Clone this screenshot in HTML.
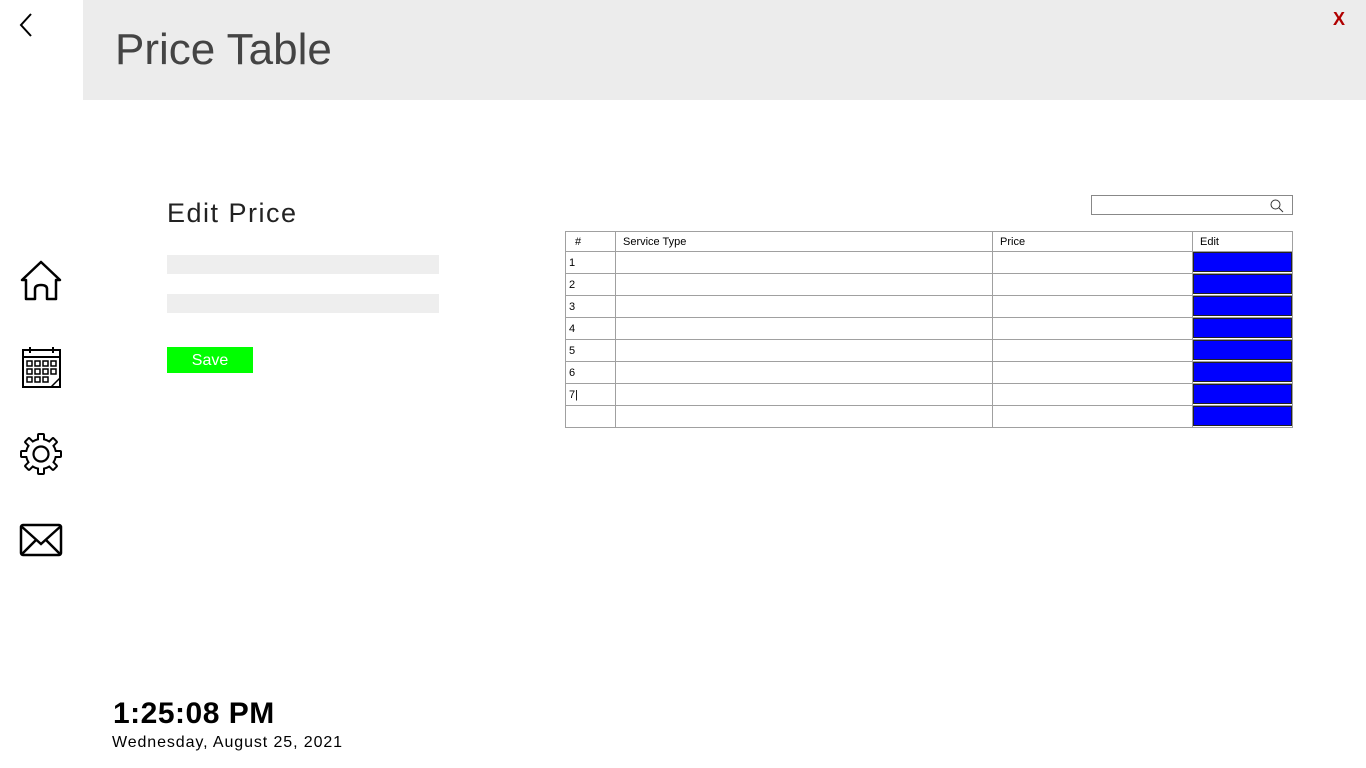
<!DOCTYPE html>
<html><head><meta charset="utf-8"><style>
body{margin:0;width:1366px;height:768px;background:#fff;position:relative;overflow:hidden;font-family:"Liberation Sans",sans-serif}
.a{position:absolute}
.hl{position:absolute;left:565px;width:728px;height:1px;background:#a0a0a0}
.vl{position:absolute;top:231px;height:197px;width:1px;background:#a0a0a0}
.t{position:absolute;font-size:11px;color:#000}
.b{position:absolute;left:1193px;width:99px;height:20px;background:#0000ff;border:1px solid #222;box-sizing:border-box}
</style></head><body>
<div class="a" style="left:83px;top:0;width:1283px;height:100px;background:#ececec"></div>
<div class="a" style="left:115px;top:25px;font-size:44px;color:#444;letter-spacing:0px">Price Table</div>
<div class="a" style="left:1333px;top:9px;font-size:18px;color:#b00000;font-weight:bold">X</div>
<svg class="a" style="left:16px;top:12px" width="20" height="28"><path d="M15 2 L5 13 L15 24" fill="none" stroke="#000" stroke-width="2"/></svg>
<svg class="a" style="left:18px;top:258px" width="48" height="48" viewBox="0 0 48 48"><path d="M4 22 L23 4 L42 22 L38 22 L38 41 L29 41 L29 31 Q29 27 23 27 Q17 27 17 31 L17 41 L8 41 L8 22 Z" fill="none" stroke="#000" stroke-width="2.5" stroke-linejoin="round"/></svg>
<svg class="a" style="left:20px;top:346px" width="42" height="44" viewBox="0 0 42 44"><rect x="3" y="4" width="37" height="37" fill="none" stroke="#000" stroke-width="2"/><line x1="3" y1="11" x2="40" y2="11" stroke="#000" stroke-width="2"/><line x1="10" y1="1" x2="10" y2="7" stroke="#000" stroke-width="2"/><line x1="33" y1="1" x2="33" y2="7" stroke="#000" stroke-width="2"/><g fill="none" stroke="#000" stroke-width="1.5"><rect x="7" y="15" width="5" height="5"/><rect x="15" y="15" width="5" height="5"/><rect x="23" y="15" width="5" height="5"/><rect x="31" y="15" width="5" height="5"/><rect x="7" y="23" width="5" height="5"/><rect x="15" y="23" width="5" height="5"/><rect x="23" y="23" width="5" height="5"/><rect x="31" y="23" width="5" height="5"/><rect x="7" y="31" width="5" height="5"/><rect x="15" y="31" width="5" height="5"/><rect x="23" y="31" width="5" height="5"/><path d="M31 41 L40 32"/></g></svg>
<svg class="a" style="left:18px;top:431px" width="46" height="46" viewBox="0 0 46 46">
<g fill="#000"><circle cx="23" cy="23" r="16"/>
<rect x="19" y="2" width="8" height="12" rx="2"/><rect x="19" y="2" width="8" height="12" rx="2" transform="rotate(45 23 23)"/><rect x="19" y="2" width="8" height="12" rx="2" transform="rotate(90 23 23)"/><rect x="19" y="2" width="8" height="12" rx="2" transform="rotate(135 23 23)"/><rect x="19" y="2" width="8" height="12" rx="2" transform="rotate(180 23 23)"/><rect x="19" y="2" width="8" height="12" rx="2" transform="rotate(225 23 23)"/><rect x="19" y="2" width="8" height="12" rx="2" transform="rotate(270 23 23)"/><rect x="19" y="2" width="8" height="12" rx="2" transform="rotate(315 23 23)"/></g>
<g fill="#fff"><circle cx="23" cy="23" r="14"/>
<rect x="21" y="4" width="4" height="12"/><rect x="21" y="4" width="4" height="12" transform="rotate(45 23 23)"/><rect x="21" y="4" width="4" height="12" transform="rotate(90 23 23)"/><rect x="21" y="4" width="4" height="12" transform="rotate(135 23 23)"/><rect x="21" y="4" width="4" height="12" transform="rotate(180 23 23)"/><rect x="21" y="4" width="4" height="12" transform="rotate(225 23 23)"/><rect x="21" y="4" width="4" height="12" transform="rotate(270 23 23)"/><rect x="21" y="4" width="4" height="12" transform="rotate(315 23 23)"/></g>
<circle cx="23" cy="23" r="7.5" fill="none" stroke="#000" stroke-width="2.2"/></svg>
<svg class="a" style="left:19px;top:522px" width="44" height="36" viewBox="0 0 44 36"><rect x="2" y="3" width="40" height="30" rx="2" fill="none" stroke="#000" stroke-width="2.5"/><path d="M2 4 L22 22 L42 4 M2 33 L17 18 M42 33 L27 18" fill="none" stroke="#000" stroke-width="2.5"/></svg>
<div class="a" style="left:167px;top:198px;font-size:27px;color:#222;letter-spacing:1.5px">Edit Price</div>
<div class="a" style="left:167px;top:255px;width:272px;height:19px;background:#eeeeee"></div>
<div class="a" style="left:167px;top:294px;width:272px;height:19px;background:#eeeeee"></div>
<div class="a" style="left:167px;top:347px;width:86px;height:26px;background:#00ff00;color:#fff;font-size:16px;text-align:center;line-height:27px">Save</div>
<div class="a" style="left:1091px;top:195px;width:200px;height:18px;border:1px solid #888"></div>
<svg class="a" style="left:1269px;top:198px" width="16" height="16"><circle cx="6.5" cy="6.5" r="4.5" fill="none" stroke="#333" stroke-width="1"/><path d="M10 10 L14 14" stroke="#333"/></svg>
<div class="hl" style="top:231px"></div>
<div class="hl" style="top:251px"></div><div class="hl" style="top:273px"></div><div class="hl" style="top:295px"></div><div class="hl" style="top:317px"></div><div class="hl" style="top:339px"></div><div class="hl" style="top:361px"></div><div class="hl" style="top:383px"></div><div class="hl" style="top:405px"></div><div class="hl" style="top:427px"></div>
<div class="vl" style="left:565px"></div><div class="vl" style="left:615px"></div><div class="vl" style="left:992px"></div><div class="vl" style="left:1192px"></div><div class="vl" style="left:1292px"></div>
<div class="t" style="left:575px;top:236px">#</div><div class="t" style="left:623px;top:236px">Service Type</div><div class="t" style="left:1000px;top:236px">Price</div><div class="t" style="left:1200px;top:236px">Edit</div>
<div class="t" style="left:569px;top:257px">1</div><div class="t" style="left:569px;top:279px">2</div><div class="t" style="left:569px;top:301px">3</div><div class="t" style="left:569px;top:323px">4</div><div class="t" style="left:569px;top:345px">5</div><div class="t" style="left:569px;top:367px">6</div><div class="t" style="left:569px;top:389px">7|</div>
<div class="b" style="top:252px"></div><div class="b" style="top:274px"></div><div class="b" style="top:296px"></div><div class="b" style="top:318px"></div><div class="b" style="top:340px"></div><div class="b" style="top:362px"></div><div class="b" style="top:384px"></div><div class="b" style="top:406px"></div>
<div class="a" style="left:113px;top:697px;font-size:30px;font-weight:bold;color:#000;letter-spacing:0.5px">1:25:08 PM</div>
<div class="a" style="left:112px;top:734px;font-size:16px;color:#000;letter-spacing:0.9px">Wednesday, August 25, 2021</div>
</body></html>
